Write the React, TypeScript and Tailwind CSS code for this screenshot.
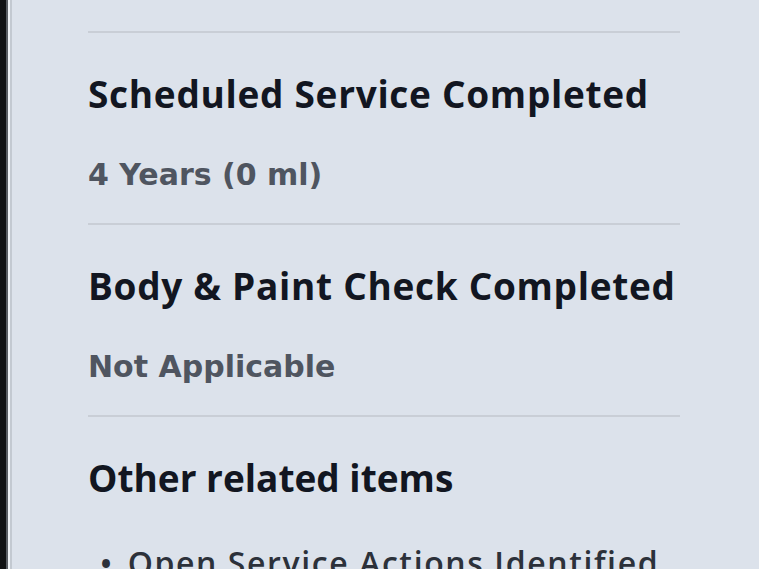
const items = [
  { title: "Scheduled Service Completed", value: "4 Years (0 ml)" },
  { title: "Body & Paint Check Completed", value: "Not Applicable" },
]

function Divider() {
  return <div className="h-[2px] w-[592px] shrink-0 bg-[#c9ced6]" />
}

export default function App() {
  return (
    <div className="flex h-[569px] w-[759px] overflow-hidden bg-[#dce2eb] font-['Open_Sans',sans-serif]">
      {/* phone bezel edge */}
      <div className="w-[6px] shrink-0 bg-[#111214]" />
      <div className="w-[2px] shrink-0 bg-[#5a5e64]" />
      <div className="w-[2px] shrink-0 bg-[#eef1f5]" />
      <div className="w-[2px] shrink-0 bg-[#c3c9d1]" />

      <div className="flex shrink-0 flex-col pl-[76px] pt-[31px]">
        <Divider />
        {items.map((item) => (
          <div key={item.title} className="flex shrink-0 flex-col">
            <h2 className="mt-[39px] text-[37px] font-bold leading-[44px] tracking-[0.7px] text-[#121621]">
              {item.title}
            </h2>
            <p className="mt-[40px] font-['DejaVu_Sans',sans-serif] text-[30px] font-bold leading-[38px] text-[#4f5560]">
              {item.value}
            </p>
            <div className="mt-[29px]">
              <Divider />
            </div>
          </div>
        ))}
        <h2 className="mt-[39px] shrink-0 text-[37px] font-bold leading-[44px] text-[#121621]">
          Other related items
        </h2>
        <ul className="mt-[43px] shrink-0 text-[32px] font-semibold leading-[40px] tracking-[1.6px] text-[#2c313a]">
          <li className="flex gap-[14px] pl-[12px]">
            <span>•</span>
            <span>Open Service Actions Identified</span>
          </li>
        </ul>
      </div>
    </div>
  )
}
